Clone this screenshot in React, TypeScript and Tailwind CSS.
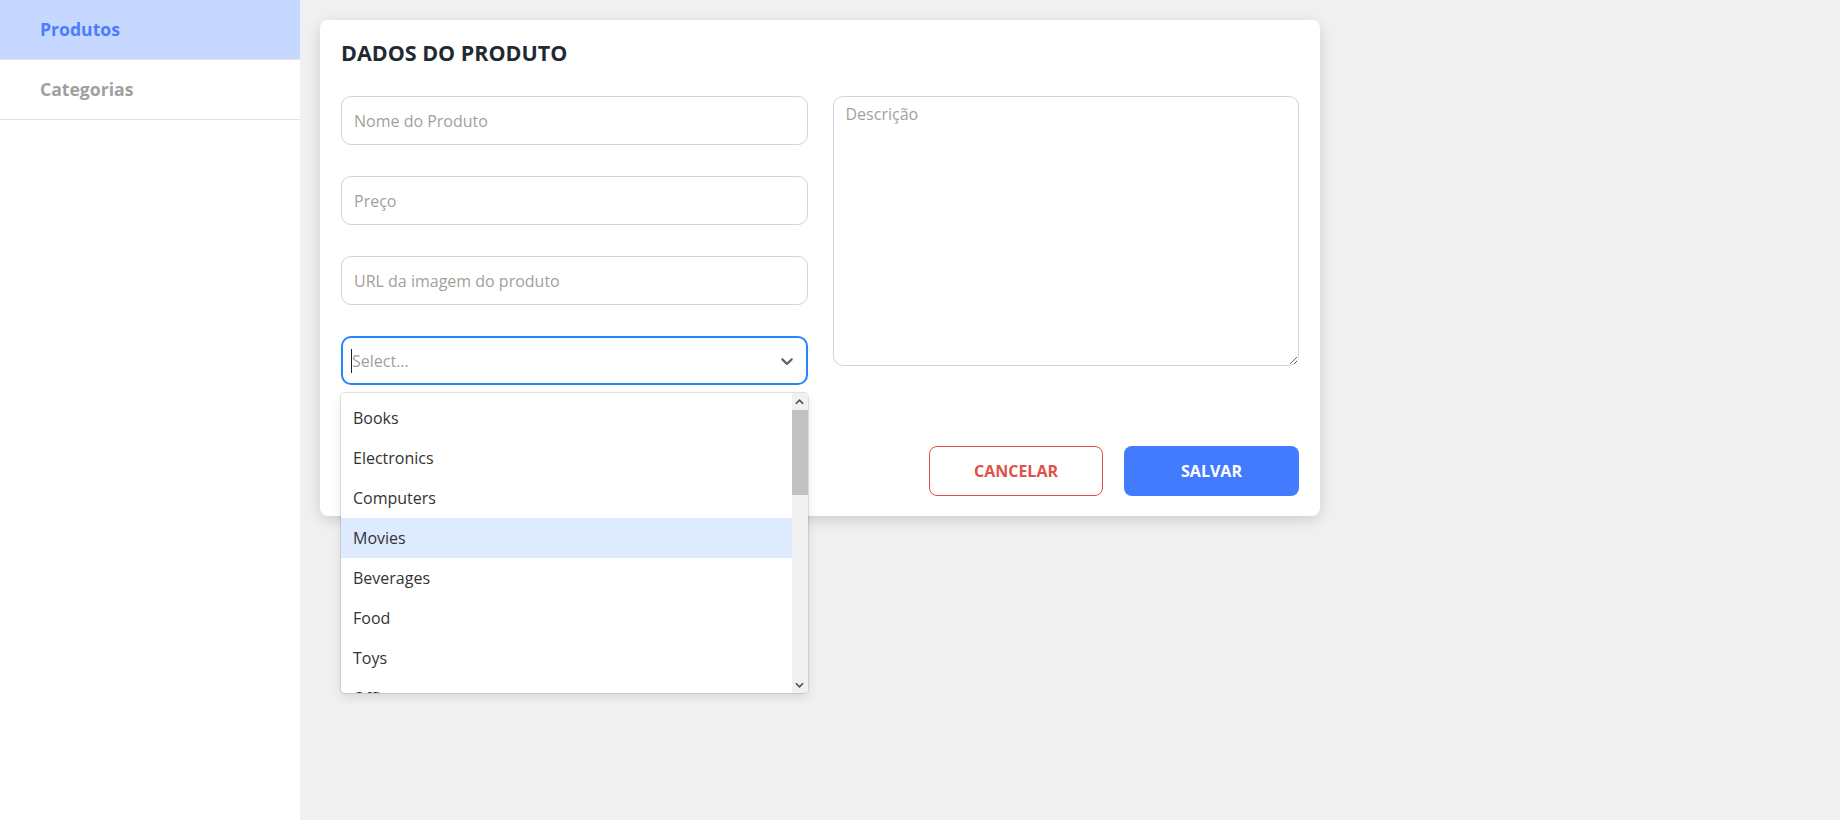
import { useState } from "react";

const categories = [
  "Books",
  "Electronics",
  "Computers",
  "Movies",
  "Beverages",
  "Food",
  "Toys",
  "Office",
  "Sports",
];

function Sidebar() {
  const items = [
    { key: "produtos", label: "Produtos", active: true },
    { key: "categorias", label: "Categorias", active: false },
  ];
  return (
    <aside className="w-[300px] shrink-0 bg-white">
      {items.map((item) => (
        <div
          key={item.key}
          className={`flex h-[60px] items-center border-b border-[#e2e2e2] pl-[40px] text-[17.6px] font-bold ${
            item.active ? "bg-[#c6d8ff] text-[#4b7dfb]" : "text-[#a0a0a0]"
          }`}
        >
          {item.label}
        </div>
      ))}
    </aside>
  );
}

function Chevron({ up = false }: { up?: boolean }) {
  return (
    <svg
      viewBox="0 0 20 20"
      className={`h-[20px] w-[20px] fill-current ${up ? "rotate-180" : ""}`}
    >
      <path d="M4.516 7.548c0.436-0.446 1.043-0.481 1.576 0l3.908 3.747 3.908-3.747c0.533-0.481 1.141-0.446 1.574 0 0.436 0.445 0.408 1.197 0 1.615-0.406 0.418-4.695 4.502-4.695 4.502-0.217 0.223-0.502 0.335-0.787 0.335s-0.57-0.112-0.789-0.335c0 0-4.287-4.084-4.695-4.502s-0.436-1.17 0-1.615z" />
    </svg>
  );
}

function ScrollArrow({ up = false }: { up?: boolean }) {
  return (
    <div className="flex h-[17px] items-center justify-center">
      <svg viewBox="0 0 10 6" className="h-[6px] w-[9px]">
        <path
          d={up ? "M1 5 L5 1 L9 5" : "M1 1 L5 5 L9 1"}
          fill="none"
          stroke="#505050"
          strokeWidth="1.8"
        />
      </svg>
    </div>
  );
}

function CategorySelect() {
  const [hovered] = useState("Movies");
  return (
    <div className="relative">
      <div className="flex h-[49px] items-center rounded-[10px] border-2 border-[#2684ff] bg-white pl-[8px] pr-[9px]">
        <span className="h-[24px] w-px bg-[#222]" />
        <span className="flex-1 text-base text-[#a0a0a0]">Select...</span>
        <span className="text-[#666]">
          <Chevron />
        </span>
      </div>

      <div className="absolute left-0 right-0 top-[57px] z-10 flex h-[300px] overflow-hidden rounded bg-white shadow-[0_0_0_1px_rgba(0,0,0,0.1),0_4px_11px_rgba(0,0,0,0.1)]">
        <ul className="flex-1 overflow-hidden pb-1 pt-[5px]">
          {categories.map((c) => (
            <li
              key={c}
              className={`px-3 py-2 text-base leading-6 text-[#333] ${
                c === hovered ? "bg-[#deebff]" : ""
              }`}
            >
              {c}
            </li>
          ))}
        </ul>
        <div className="flex w-[16px] flex-col bg-[#f1f1f1]">
          <ScrollArrow up />
          <div className="h-[85px] bg-[#c1c1c1]" />
          <div className="flex-1" />
          <ScrollArrow />
        </div>
      </div>
    </div>
  );
}

const inputClass =
  "h-[49px] w-full rounded-[10px] border border-[#d0d4da] bg-white px-3 text-base text-[#333] placeholder:text-[#a39f9c] focus:outline-none";

export default function App() {
  return (
    <div
      className="flex h-[820px] bg-[#f0f0f0]"
      style={{ fontFamily: '"Open Sans", "Noto Sans", sans-serif' }}
    >
      <Sidebar />

      <main className="flex-1 pl-5 pt-5">
        <div className="w-[1000px] rounded-lg bg-white px-[21px] pb-5 pt-[18px] shadow-[0_4px_14px_rgba(0,0,0,0.14)]">
          <h1 className="text-[21.5px] font-bold leading-[30px] text-[#1f2a35]">
            DADOS DO PRODUTO
          </h1>

          <div className="mt-[28px] grid grid-cols-2 gap-x-[25px]">
            <div className="flex flex-col gap-[31px]">
              <input className={inputClass} placeholder="Nome do Produto" />
              <input className={inputClass} placeholder="Preço" />
              <input className={inputClass} placeholder="URL da imagem do produto" />
              <CategorySelect />
            </div>

            <textarea
              className="h-[270px] w-full rounded-[10px] border border-[#d0d4da] bg-white px-3 py-[5px] text-base text-[#333] placeholder:text-[#a39f9c] focus:outline-none"
              placeholder="Descrição"
            />
          </div>

          <div className="mt-[61px] flex justify-end gap-[21px]">
            <button
              type="button"
              className="h-[50px] w-[174px] rounded-lg border border-[#e0514b] bg-white text-base font-bold text-[#e0514b]"
            >
              CANCELAR
            </button>
            <button
              type="button"
              className="h-[50px] w-[175px] rounded-lg bg-[#437bff] text-base font-bold text-white"
            >
              SALVAR
            </button>
          </div>
        </div>
      </main>
    </div>
  );
}
